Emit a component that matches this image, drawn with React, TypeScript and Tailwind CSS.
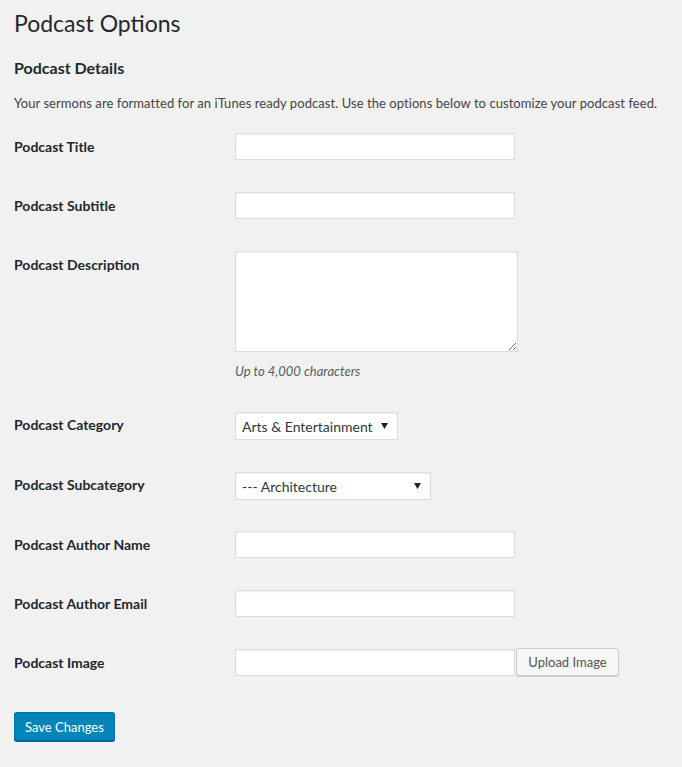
import React from 'react';

const font = { fontFamily: 'Lato, "Open Sans", sans-serif' };

const inputCls =
    'h-[27px] w-[280px] border border-[#ddd] bg-white shadow-[inset_0_1px_2px_rgba(0,0,0,0.07)] outline-none';

// Triangle used on the select boxes
const Caret = () => (
    <svg width="7" height="6" viewBox="0 0 7 6" className="pointer-events-none absolute top-[11px]" style={{ right: 10 }}>
        <path d="M0 0h7L3.5 6z" fill="#222" />
    </svg>
);

const Row: React.FC<{ label: string; pad?: string; children: React.ReactNode }> = ({ label, pad = 'py-[15px]', children }) => (
    <div className="flex">
        <div className="w-[221px] shrink-0 pt-[20px] pb-[21px] text-[14px] font-bold leading-[18px] text-[#23282d]">{label}</div>
        <div className={pad}>{children}</div>
    </div>
);

const SelectBox: React.FC<{ value: string; width: string }> = ({ value, width }) => (
    <div className={`relative h-[28px] ${width}`}>
        <select className="h-[28px] w-full appearance-none border border-[#ddd] bg-white pl-[6px] text-[14px] text-[#32373c] shadow-[inset_0_1px_2px_rgba(0,0,0,0.07)] outline-none" defaultValue={value}>
            <option>{value}</option>
        </select>
        <Caret />
    </div>
);

const App: React.FC = () => {
    return (
        <div className="min-h-[767px] bg-[#f1f1f1] px-[14px] pt-[9px]" style={font}>
            <h1 className="text-[23px] font-normal leading-[29px] text-[#23282d]">Podcast Options</h1>

            <h2 className="mt-[19px] text-[16px] font-bold leading-[22px] text-[#23282d]">Podcast Details</h2>
            <p className="mt-[15px] text-[13px] leading-[18px] tracking-[0.06px] text-[#444]">
                Your sermons are formatted for an iTunes ready podcast. Use the options below to customize your podcast feed.
            </p>

            {/* Settings table */}
            <div className="mt-[6px]">
                <Row label="Podcast Title">
                    <input className={inputCls} />
                </Row>
                <Row label="Podcast Subtitle">
                    <input className={inputCls} />
                </Row>
                <Row label="Podcast Description">
                    <textarea className="block h-[101px] w-[283px] border border-[#ddd] bg-white shadow-[inset_0_1px_2px_rgba(0,0,0,0.07)] outline-none" />
                    <p className="mt-[9px] text-[13px] italic leading-[20px] text-[#555d66]">Up to 4,000 characters</p>
                </Row>
                <Row label="Podcast Category" pad="py-[16px]">
                    <SelectBox value="Arts & Entertainment" width="w-[163px]" />
                </Row>
                <Row label="Podcast Subcategory" pad="py-[16px]">
                    <SelectBox value="--- Architecture" width="w-[196px]" />
                </Row>
                <Row label="Podcast Author Name">
                    <input className={inputCls} />
                </Row>
                <Row label="Podcast Author Email">
                    <input className={inputCls} />
                </Row>
                <Row label="Podcast Image">
                    <div className="flex items-start">
                        <input className={inputCls} />
                        <button className="ml-[1px] -mt-[1px] h-[28px] w-[103px] rounded-[3px] border border-[#ccc] bg-[#f7f7f7] text-[13px] leading-[26px] text-[#555] shadow-[0_1px_0_#ccc]">
                            Upload Image
                        </button>
                    </div>
                </Row>
            </div>

            <div className="mt-[19px]">
                <button className="h-[29px] rounded-[3px] border border-[#0073aa] border-b-[#006799] bg-[#0085ba] px-[10px] text-[13px] leading-[26px] text-white shadow-[0_1px_0_#006799]">
                    Save Changes
                </button>
            </div>
        </div>
    );
};

export default App;
